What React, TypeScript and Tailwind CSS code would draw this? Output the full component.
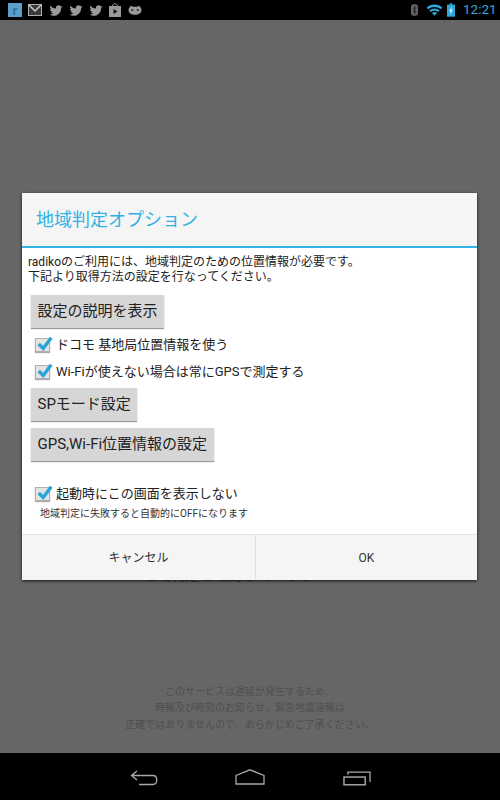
import { FaTwitter } from "react-icons/fa";

const FONT = "font-['Roboto','Noto_Sans_CJK_JP',sans-serif]";

const CheckRow = ({ label }: { label: string }) => (
  <div className="flex items-center h-[27px] pl-[4px]">
    <div className="relative w-[15px] h-[14px] bg-[#e4e4e4] border border-[#b0b0b0] shadow-[0_1px_1px_#aaa]">
      <svg viewBox="0 0 20 20" className="absolute -top-[4px] left-0 w-[18px] h-[18px]">
        <path d="M3 10 L8 15 L17 3" fill="none" stroke="#2aa5d8" strokeWidth="3.8" />
      </svg>
    </div>
    <span className="ml-[6px] text-[13px] text-[#222] whitespace-nowrap">{label}</span>
  </div>
);

const GrayButton = ({ label }: { label: string }) => (
  <div className="w-fit h-[33px] px-[6.5px] flex items-center bg-[#d6d6d6] shadow-[0_1px_1px_#9a9a9a] text-[15px] text-[#222] whitespace-nowrap">
    {label}
  </div>
);

const App = () => {
  return (
    <div className={`${FONT} w-[500px] h-[800px] flex flex-col bg-black overflow-hidden`}>
      {/* status bar */}
      <div className="h-[20px] flex items-center bg-black pl-[8px] pr-[7px]">
        <div className="w-[14px] h-[14px] bg-[#5b9fc9] flex items-center justify-center">
          <span className="text-[13px] leading-none font-bold text-[#2f6f9c]">r</span>
        </div>
        <svg viewBox="0 0 14 12" className="ml-[6px] w-[14px] h-[12px]">
          <rect x="0.5" y="0.5" width="13" height="11" fill="#3a3a3a" stroke="#b0b0b0" />
          <path d="M1 1 L7 7 L13 1" fill="none" stroke="#c8c8c8" strokeWidth="1.5" />
        </svg>
        <FaTwitter className="ml-[7px] w-[14px] h-[13px] text-[#9a9a9a]" />
        <FaTwitter className="ml-[6px] w-[14px] h-[13px] text-[#9a9a9a]" />
        <FaTwitter className="ml-[6px] w-[14px] h-[13px] text-[#9a9a9a]" />
        <svg viewBox="0 0 13 14" className="ml-[5px] w-[14px] h-[14px]">
          <path d="M4 3 C4 0 9 0 9 3" fill="none" stroke="#9a9a9a" />
          <rect x="0.5" y="3" width="12" height="11" fill="#9a9a9a" />
          <path d="M5 6 L9 8.5 L5 11 Z" fill="#111" />
        </svg>
        <svg viewBox="0 0 15 10" className="ml-[6px] w-[14px] h-[10px]">
          <path d="M1 3 L3 0.5 L5.5 1.5 L9.5 1.5 L12 0.5 L14 3 C15.5 7 13 10 7.5 10 C2 10 -0.5 7 1 3 Z" fill="#9a9a9a" />
          <circle cx="4.5" cy="5" r="1.2" fill="#333" />
          <circle cx="10.5" cy="5" r="1.2" fill="#333" />
        </svg>
        <div className="flex-1" />
        <svg viewBox="0 0 8 13" className="w-[7px] h-[12px]">
          <rect x="0" y="0" width="8" height="13" rx="3" fill="#666" />
          <path d="M2 4 L6 9 L4 11 L4 2 L6 4 L2 9" fill="none" stroke="#222" />
        </svg>
        <svg viewBox="0 0 18 13" className="ml-[8px] w-[17px] h-[12px]">
          <path d="M0.5 4 C5 -0.5 13 -0.5 17.5 4 L15.8 5.8 C12 2.3 6 2.3 2.2 5.8 Z" fill="#2fa9dc" />
          <path d="M3.4 7 C6.5 4 11.5 4 14.6 7 L13 8.7 C10.5 6.5 7.5 6.5 5 8.7 Z" fill="#2fa9dc" />
          <path d="M6.2 9.8 C8 8.3 10 8.3 11.8 9.8 L9 12.8 Z" fill="#2fa9dc" />
        </svg>
        <svg viewBox="0 0 9 15" className="ml-[4px] w-[8px] h-[14px]">
          <rect x="3" y="0" width="3" height="2" fill="#2fa9dc" />
          <rect x="0" y="1.5" width="9" height="13.5" fill="#2fa9dc" />
          <path d="M5.5 3.5 L2.5 9 L4.2 9 L3.5 13 L6.5 7.5 L4.8 7.5 Z" fill="#e8f6fc" />
        </svg>
        <span className="ml-[8px] w-[30px] text-[13.5px] leading-none text-[#2fa9dc] whitespace-nowrap">12:21</span>
      </div>

      {/* dimmed page behind the dialog */}
      <div className="relative flex-1 flex flex-col items-center justify-end bg-[#666666] pb-[20px]">
        <p className="mb-[98px] text-[14.5px] leading-[20px] text-[#3a3a3a] whitespace-nowrap">地域判定を確認しています・・・</p>
        <div className="text-[10px] leading-[16.5px] text-center text-[#4f4f4f]">
          <p>このサービスは遅延が発生するため、</p>
          <p>時報及び時刻のお知らせ、緊急地震速報は</p>
          <p>正確ではありませんので、あらかじめご了承ください。</p>
        </div>

        <div className="absolute inset-0 flex items-center justify-center">
          <div className="mr-[1px] w-[455px] h-[387px] flex flex-col bg-white shadow-[0_1px_3px_rgba(0,0,0,0.8)]">
            <div className="h-[53px] flex items-center pl-[14px] bg-[#f5f5f5] text-[18px] text-[#2fb1e3]">
              地域判定オプション
            </div>
            <div className="h-[2px] bg-[#33b5e5]" />
            <div className="flex-1 flex flex-col px-[6px] pt-[7px]">
              <p className="text-[12px] leading-[15px] text-[#222] whitespace-nowrap">
                radikoのご利用には、地域判定のための位置情報が必要です。
                <br />
                下記より取得方法の設定を行なってください。
              </p>
              <div className="mt-[10px] ml-[3px] flex flex-col">
                <GrayButton label="設定の説明を表示" />
                <div className="mt-[3px]">
                  <CheckRow label="ドコモ 基地局位置情報を使う" />
                  <CheckRow label="Wi-Fiが使えない場合は常にGPSで測定する" />
                </div>
                <div className="mt-[3px]">
                  <GrayButton label="SPモード設定" />
                </div>
                <div className="mt-[7px]">
                  <GrayButton label="GPS,Wi-Fi位置情報の設定" />
                </div>
                <div className="mt-[19px]">
                  <CheckRow label="起動時にこの画面を表示しない" />
                </div>
                <p className="ml-[9px] text-[10px] leading-[13px] text-[#333] whitespace-nowrap">
                  地域判定に失敗すると自動的にOFFになります
                </p>
              </div>
            </div>
            <div className="h-[46px] flex border-t border-[#e4e4e4] bg-[#f5f5f5] text-[12px] text-[#333]">
              <div className="w-[234px] flex items-center justify-center border-r border-[#e0e0e0]">キャンセル</div>
              <div className="flex-1 flex items-center justify-center">OK</div>
            </div>
          </div>
        </div>
      </div>

      {/* navigation bar */}
      <div className="h-[47px] flex items-center bg-black">
        <svg viewBox="0 0 28 17" className="ml-[130px] mt-[3px] w-[28px] h-[17px]">
          <path d="M7 1 L1.5 5.5 L7 10 M1.5 5.5 L23 5.5 C28 5.5 28 14.5 23 14.5 L9 14.5" fill="none" stroke="#a8a8a8" strokeWidth="1.3" />
        </svg>
        <svg viewBox="0 0 30 16" className="ml-[77px] w-[30px] h-[16px]">
          <path d="M1 6.5 L15 0.8 L29 6.5 L29 15 L1 15 Z" fill="none" stroke="#a8a8a8" strokeWidth="1.3" />
        </svg>
        <svg viewBox="0 0 29 15" className="ml-[78px] mt-[3px] w-[28px] h-[15px]">
          <rect x="1" y="6" width="22" height="8" fill="none" stroke="#a8a8a8" strokeWidth="1.5" />
          <path d="M5 3.5 L5 1 L28 1 L28 11" fill="none" stroke="#a8a8a8" strokeWidth="1.3" />
        </svg>
      </div>
    </div>
  );
};

export default App;
